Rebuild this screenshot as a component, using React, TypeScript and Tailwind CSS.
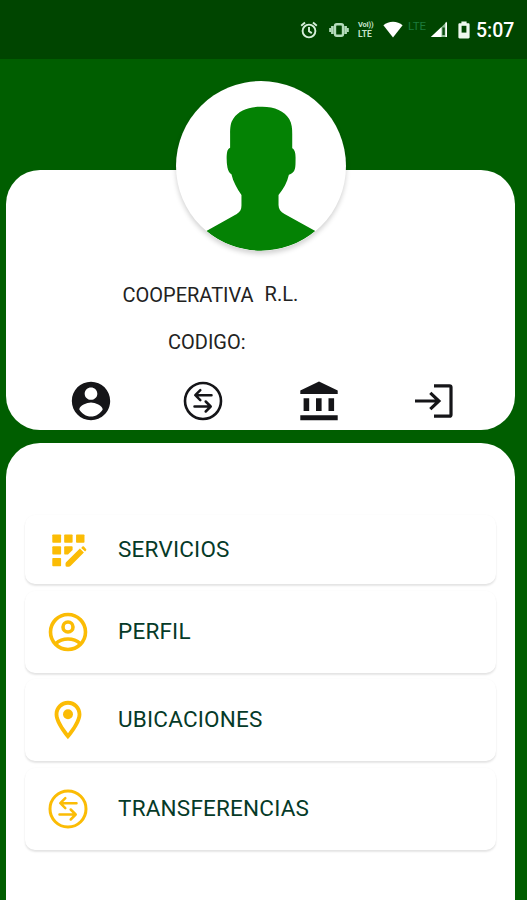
import type { ReactNode } from 'react';

interface IconProps {
  className?: string;
}

const AlarmIcon = () => (
  <svg width="18" height="18" viewBox="0 0 18 18" fill="none" stroke="#d5eed9" strokeWidth="1.9">
    <circle cx="9" cy="10" r="6.4" />
    <path d="M9 6v4.200l2.800 1.900M1.200 4.700l3.800-3.200M16.800 4.700l-3.800-3.200" />
  </svg>
);

const VibrateIcon = () => (
  <svg width="20" height="16" viewBox="0 0 20 16" fill="none" stroke="#b5dcbc">
    <rect x="6" y="2.200" width="8" height="11.600" rx="1.800" strokeWidth="2.400" />
    <path d="M3.400 4v8M16.600 4v8" strokeWidth="2.600" />
    <path d="M1.200 6v4M18.800 6v4" strokeWidth="2" />
  </svg>
);

const WifiIcon = () => (
  <svg width="20" height="17" viewBox="0 0 20 17" fill="#fff">
    <path d="M10 16.600.4 4.200C3 2 6.300.8 10 .8s7 1.200 9.600 3.400z" />
  </svg>
);

const SignalIcon = () => (
  <svg width="18" height="17" viewBox="0 0 18 17">
    <path d="M17 .6V16H1.600z" fill="#8fbc95" />
    <path d="M11.500 6.100V16H.8zM15.400 1.500H17V16h-1.600z" fill="#fff" />
    <path d="M12.400 6.500h2.400V14h-2.400z" fill="#0d4c12" />
  </svg>
);

const BatteryIcon = () => (
  <svg width="12" height="18" viewBox="0 0 12 18">
    <path
      d="M3.400.4h5.200v1.800h1.800c.7 0 1.200.5 1.200 1.200v12.800c0 .7-.5 1.200-1.200 1.200H1.600c-.7 0-1.200-.5-1.200-1.200V3.400c0-.7.5-1.200 1.200-1.200h1.800z"
      fill="#eef8ef"
    />
    <path d="M3.600 4.800h4.800v6.800H3.600z" fill="#004500" />
  </svg>
);

const Silhouette = () => (
  <svg className="size-full" viewBox="46 33 509 509" fill="#048204">
    <path d="M300 110C340 109 370 122 385 147C393 160 394 176 394 192V234C401 238 404 246 404 262C404 284 404 296 399 303C395 309 389 312 384 314C379 337 368 356 353 374V404C353 416 359 424 371 431L463 482A254.500 254.500 0 0 1 137 482L228 431C238 425 242 418 242 406V374C228 354 217 334 212 312C206 309 202 302 200 292C197 276 197 256 199 246C200 240 203 236 208 233V192C208 172 209 158 218 145C234 121 264 110 300 110Z" />
  </svg>
);

const AccountIcon = () => (
  <svg width="46" height="46" viewBox="0 0 24 24" fill="#151518">
    <path d="M12 2C6.480 2 2 6.480 2 12s4.480 10 10 10 10-4.480 10-10S17.520 2 12 2zm0 3c1.800 0 3.300 1.400 3.300 3.200s-1.500 3.200-3.300 3.200-3.300-1.400-3.300-3.200 1.500-3.200 3.300-3.200zm0 15.100c-2.600 0-4.800-1.600-6.100-3.700.03-1.990 4-3.600 6.100-3.600s6.070 1.600 6.100 3.600c-1.300 2.100-3.500 3.700-6.100 3.700z" />
  </svg>
);

const TransferIcon = ({ className }: IconProps) => (
  <svg className={className} width="40" height="40" viewBox="0 0 40 40" fill="none" stroke="currentColor">
    <circle cx="20" cy="20" r="18" />
    <path
      d="M28.500 14.200H12.500M17.300 9.200l-5 5 5 5M11.500 25.500H27.500M22.700 20.500l5 5-5 5"
      strokeLinecap="round"
      strokeLinejoin="round"
      strokeWidth="2.500"
    />
  </svg>
);

const BankIcon = () => (
  <svg width="40" height="40" viewBox="0 0 40 40" fill="#151518">
    <path d="M20 .4 38.700 9.500V13H1.300V9.500zM4.600 17.200h5.600v12.800H4.600zM17 17.200h5.600v12.800H17zM29.500 17.200h5.600v12.800h-5.600zM1.300 34.200h37.400v5H1.300z" />
  </svg>
);

const LoginIcon = () => (
  <svg width="40" height="36" viewBox="0 0 40 36" fill="none" stroke="#151518" strokeWidth="3.200">
    <path d="M20 2.800H35.500Q37 2.800 37 4.300V31.700Q37 33.200 35.500 33.200H20" />
    <path d="M1 18H25.500M16.300 9.800l8.600 8.200-8.600 8.200" />
  </svg>
);

const ServicesIcon = () => (
  <svg width="46" height="46" viewBox="0 0 24 24" fill="#fbbc05">
    <rect x="3.800" y="3.900" width="4.600" height="4.300" rx=".4" />
    <rect x="10" y="3.900" width="4.400" height="4.300" rx=".4" />
    <rect x="16.200" y="3.900" width="4.400" height="4.300" rx=".4" />
    <rect x="3.800" y="10.100" width="4.600" height="4.300" rx=".4" />
    <path d="M10.400 10.100h3.600q.4 0 .4.400v1.500l-2.400 2.400h-1.600q-.4 0-.4-.4v-3.500q0-.4.4-.4z" />
    <rect x="3.800" y="16.200" width="4.600" height="4.300" rx=".4" />
    <path d="M11.100 18.300l7.100-7.100 2.100 2.100-7 7q-.4.400-.9.400h-.9q-.8 0-.8-.8v-.7q0-.5.4-.9zM18.900 10.900l.6-.7q.4-.4.800 0l1.100 1.300q.4.400 0 .8l-.5.500z" />
  </svg>
);

const ProfileIcon = () => (
  <svg width="40" height="40" viewBox="0 0 40 40" fill="none" stroke="#fbbc05" strokeWidth="3.600">
    <circle cx="20" cy="20" r="17.500" />
    <circle cx="20" cy="15" r="5" />
    <path d="M7.800 31.500C11 28.600 15 27 20 27s9 1.600 12.200 4.500" />
  </svg>
);

const PinIcon = () => (
  <svg width="46" height="46" viewBox="0 0 24 24" fill="#fbbc05">
    <path d="M12 2C8.130 2 5 5.130 5 9c0 5.250 7 13 7 13s7-7.750 7-13c0-3.870-3.130-7-7-7zM7 9c0-2.760 2.240-5 5-5s5 2.240 5 5c0 2.880-2.880 7.190-5 9.880C9.920 16.210 7 11.850 7 9z" />
    <circle cx="12" cy="9" r="2.600" />
  </svg>
);

interface MenuItemProps {
  icon: ReactNode;
  label: string;
  className: string;
}

const MenuItem = ({ icon, label, className }: MenuItemProps) => (
  <li
    className={`flex items-center rounded-[10px] bg-white shadow-[0_2px_2px_rgba(0,0,0,0.1),0_0_2px_rgba(0,0,0,0.03)] ${className}`}
  >
    <span className="ml-[18.5px] flex w-12 justify-center">{icon}</span>
    <span className="mb-[2px] ml-[26.5px] text-[22.5px] leading-6 tracking-[0.2px] text-[#053a28]">{label}</span>
  </li>
);

const StatusBar = () => (
  <header className="flex h-[59px] items-center justify-end bg-[#004500] pr-3 text-white">
    <AlarmIcon />
    <span className="ml-[11px]">
      <VibrateIcon />
    </span>
    <span className="ml-[9px] flex w-[18px] flex-col text-[8.5px] font-bold text-[#c4e4ca]">
      <span className="text-[7.5px] leading-[9px] tracking-[-0.2px]">VoI))</span>
      <span className="leading-[10px]">LTE</span>
    </span>
    <span className="ml-[7px]">
      <WifiIcon />
    </span>
    <span className="mb-2 ml-[5px] w-[20px] text-[11.5px] leading-3 text-[#1c7a3c]">LTE</span>
    <span className="ml-[2px]">
      <SignalIcon />
    </span>
    <span className="ml-[10px]">
      <BatteryIcon />
    </span>
    <span className="mt-[2px] ml-[6px] w-[39px] text-[19.5px] leading-6 font-medium">5:07</span>
  </header>
);

const App = () => {
  return (
    <div className="flex h-screen flex-col overflow-hidden bg-[#005e00] font-[Roboto,sans-serif]">
      <StatusBar />
      <main className="flex flex-1 flex-col pr-3 pl-1.5">
        <section className="mt-[111px] h-[260px] shrink-0 rounded-[34px] bg-white">
          <div className="mx-auto -mt-[89px] size-[170px] overflow-hidden rounded-full bg-white shadow-[0_3px_5px_rgba(0,0,0,0.18)]">
            <Silhouette />
          </div>
          <p className="mt-[32px] ml-[116.5px] flex gap-[11px] text-[20px] leading-6 text-[#222]">
            <span>COOPERATIVA</span>
            <span className="-mt-px">R.L.</span>
          </p>
          <p className="mt-[23px] ml-[162px] text-[20px] leading-6 text-[#222]">CODIGO:</p>
          <nav className="mt-[24px] flex items-center pl-[62px]">
            <AccountIcon />
            <TransferIcon className="ml-[69px] stroke-[2.6px] text-[#151518]" />
            <span className="ml-[76px]">
              <BankIcon />
            </span>
            <span className="ml-[75px]">
              <LoginIcon />
            </span>
          </nav>
        </section>
        <section className="mt-[13px] flex-1 rounded-t-[34px] bg-white px-[19px] pt-[72px]">
          <ul className="flex flex-col gap-[6.5px]">
            <MenuItem icon={<ServicesIcon />} label="SERVICIOS" className="h-[69px]" />
            <MenuItem icon={<ProfileIcon />} label="PERFIL" className="h-[82px]" />
            <MenuItem icon={<PinIcon />} label="UBICACIONES" className="h-[82px]" />
            <MenuItem
              icon={<TransferIcon className="stroke-[3px] text-[#fbbc05]" />}
              label="TRANSFERENCIAS"
              className="h-[82px]"
            />
          </ul>
        </section>
      </main>
    </div>
  );
};

export default App;
